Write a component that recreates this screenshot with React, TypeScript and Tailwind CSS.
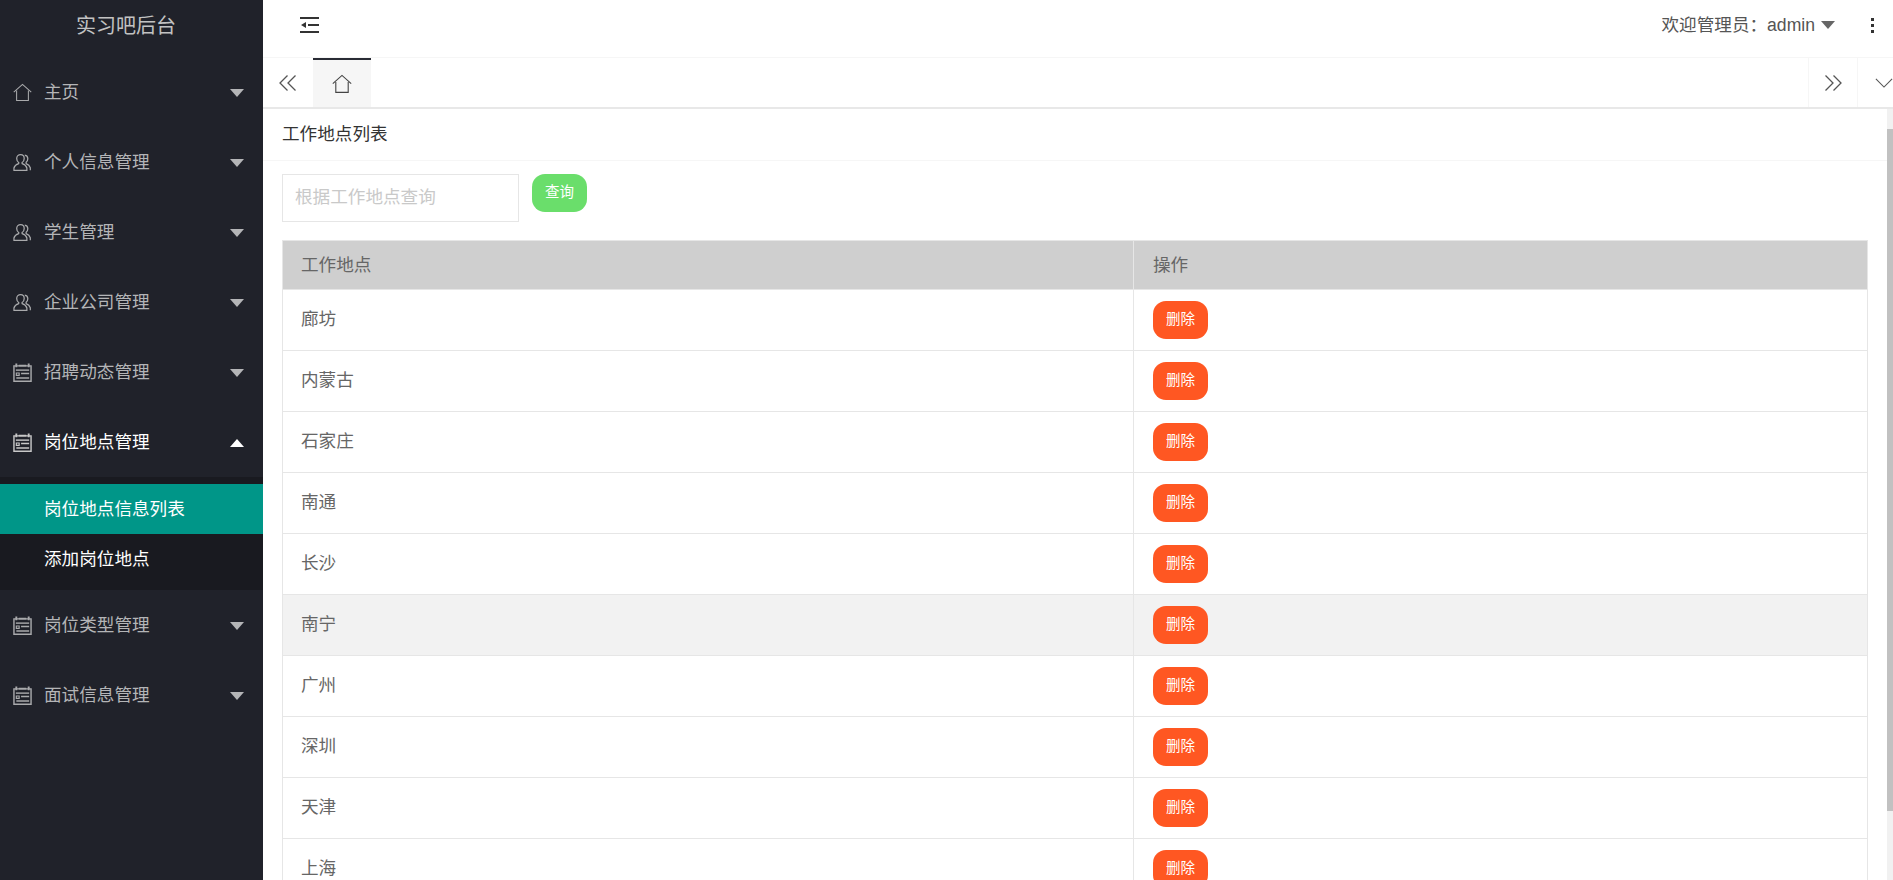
import React from "react";

const FONT = "font-['Liberation_Sans','Noto_Sans_CJK_SC',sans-serif]";

const HomeIcon = ({ className }: { className?: string }) => (
  <svg viewBox="0 0 20 20" className={className} fill="none" stroke="currentColor" strokeWidth="1.1">
    <path d="M0.8 9.6 10 1.4l9.2 8.2" />
    <path d="M3.8 8v10.4h12.4V8" />
  </svg>
);

const UsersIcon = ({ className }: { className?: string }) => (
  <svg viewBox="0 0 20 20" className={className} fill="none" stroke="currentColor" strokeWidth="1.3">
    <path d="M8 1.6c2.3 0 3.8 1.8 3.8 4.1 0 1.8-.9 3.4-2.2 4.2v1.3c2.3.8 4.4 2.2 5 4.6v2.4H1v-2.4c.6-2.4 2.7-3.800 5-4.600V9.900C4.700 9.100 3.900 7.500 3.900 5.700 3.900 3.400 5.700 1.600 8 1.600Z" />
    <path d="M12.400 2.200c2 .3 3.200 2 3.200 3.900 0 1.500-.7 2.900-1.800 3.700v1.400c2 .8 3.700 2.100 4.400 4.300v2.700" />
  </svg>
);

const ListIcon = ({ className }: { className?: string }) => (
  <svg viewBox="0 0 20 20" className={className} fill="none" stroke="currentColor">
    <path d="M1 3h18v16.300H1z" strokeWidth="1.500" />
    <path d="M3.500 0.500v4M16.500 0.500v4M6 2.800h8" strokeWidth="2" />
    <path d="M3 7.500h14" strokeWidth="1.500" />
    <path d="M3.500 10.500h3v2.500h-3z" strokeWidth="1.200" />
    <path d="M8.500 11h8.500M3.500 15.800h13.500" strokeWidth="1.600" />
  </svg>
);

const Caret = ({ up, className }: { up?: boolean; className?: string }) => (
  <svg viewBox="0 0 14 8" className={className} fill="currentColor">
    <path d={up ? "M0 8 7 0l7 8z" : "M0 0h14L7 8z"} />
  </svg>
);

const DoubleChevron = ({ left }: { left?: boolean }) => (
  <svg viewBox="0 0 18 16" className="w-[18px] h-[16px] text-[#555]" fill="none" stroke="currentColor" strokeWidth="1.300">
    {left ? <path d="M8.500 0.500 1 8l7.500 7.500M16.500 0.500 9 8l7.500 7.500" /> : <path d="M1.500 0.500 9 8l-7.500 7.500M9.500 0.500 17 8l-7.500 7.500" />}
  </svg>
);

const menu = [
  { label: "主页", icon: HomeIcon },
  { label: "个人信息管理", icon: UsersIcon },
  { label: "学生管理", icon: UsersIcon },
  { label: "企业公司管理", icon: UsersIcon },
  { label: "招聘动态管理", icon: ListIcon },
  { label: "岗位地点管理", icon: ListIcon, open: true },
  { label: "岗位类型管理", icon: ListIcon },
  { label: "面试信息管理", icon: ListIcon },
];

const places = ["廊坊", "内蒙古", "石家庄", "南通", "长沙", "南宁", "广州", "深圳", "天津", "上海"];

const Sidebar = () => (
  <aside className="w-[263px] shrink-0 h-full bg-[#20222a] text-[17.6px]">
    <div className="h-[57px] flex items-center justify-center text-[20px] text-[#c2c2c2] pb-[6px] pr-[11px]">实习吧后台</div>
    {menu.map((item) => {
      const Icon = item.icon;
      return (
        <div key={item.label}>
          <div className={`h-[70px] flex items-center pt-[1px] pl-[13px] pr-[19px] ${item.open ? "text-white" : "text-[#b4b5b7]"}`}>
            <Icon className={`w-[19px] h-[19px] mr-[12px] ${item.open ? "text-[#c8c8c8]" : "text-[#a9aaac]"}`} />
            <span className="flex-1 leading-none">{item.label}</span>
            <Caret up={item.open} className="w-[14px] h-[8px]" />
          </div>
          {item.open && (
            <div className="bg-[#191a20] pt-[7px] pb-[6px] text-white">
              <div className="h-[50px] bg-[#009688] flex items-center pl-[44px]">岗位地点信息列表</div>
              <div className="h-[50px] flex items-center pl-[44px]">添加岗位地点</div>
            </div>
          )}
        </div>
      );
    })}
  </aside>
);

const TopBar = () => (
  <header className="h-[58px] flex items-center border-b border-[#f6f6f6] text-[#555] text-[17.6px]">
    <svg viewBox="0 0 20 17" className="w-[20px] h-[17px] ml-[37px] text-[#333] mb-[6px]" fill="currentColor">
      <path d="M0 0h19v2H0zM8 7h11v2H8zM0 14h19v2H0zM1 8l5-3v6z" />
    </svg>
    <div className="ml-auto flex items-center mb-[6px]">
      <span>欢迎管理员：admin</span>
      <Caret className="w-[14px] h-[8px] ml-[6px] text-[#666]" />
      <div className="ml-[36px] mr-[19px] flex flex-col gap-[3px]">
        <span className="w-[3px] h-[3px] bg-[#333]" />
        <span className="w-[3px] h-[3px] bg-[#333]" />
        <span className="w-[3px] h-[3px] bg-[#333]" />
      </div>
    </div>
  </header>
);

const TabBar = () => (
  <div className="h-[51px] flex border-b-2 border-[#e8e8e8]">
    <div className="w-[50px] flex items-center justify-center">
      <DoubleChevron left />
    </div>
    <div className="w-[58px] bg-[#f6f6f6] border-t-2 border-[#292b34] flex items-center justify-center text-[#444]">
      <HomeIcon className="w-[20px] h-[20px]" />
    </div>
    <div className="ml-auto w-[50px] border-x border-[#f6f6f6] flex items-center justify-center">
      <DoubleChevron />
    </div>
    <div className="w-[35px] flex items-center justify-end">
      <svg viewBox="0 0 20 11" className="w-[18px] h-[10px] text-[#555]" fill="none" stroke="currentColor" strokeWidth="1.200">
        <path d="M1 1l9 9 9-9" />
      </svg>
    </div>
  </div>
);

const PlaceTable = () => (
  <table className="w-[1586px] table-fixed border-collapse text-[17.6px] text-[#666]">
    <thead>
      <tr className="h-[49px] bg-[#cfcfcf] font-normal">
        <th className="w-[851px] border border-[#e6e6e6] pl-[18px] text-left font-normal">工作地点</th>
        <th className="border border-[#e6e6e6] pl-[19px] text-left font-normal">操作</th>
      </tr>
    </thead>
    <tbody>
      {places.map((place) => (
        <tr key={place} className={`h-[61px] ${place === "南宁" ? "bg-[#f2f2f2]" : ""}`}>
          <td className="border border-[#e6e6e6] pl-[18px] pb-[2px]">{place}</td>
          <td className="border border-[#e6e6e6] pl-[19px]">
            <button className="w-[55px] h-[38px] rounded-[13px] bg-[#ff5722] text-white text-[14.500px] block">删除</button>
          </td>
        </tr>
      ))}
    </tbody>
  </table>
);

export default function App() {
  return (
    <div className={`${FONT} h-screen w-full flex overflow-hidden bg-white`}>
      <Sidebar />
      <main className="flex-1 min-w-0 flex flex-col">
        <TopBar />
        <TabBar />
        <div className="flex-1 min-h-0 flex">
          <div className="flex-1 min-w-0 overflow-hidden">
            <div className="h-[52px] border-b border-[#f6f6f6] pl-[19px] flex items-center text-[17.6px] text-[#333]">工作地点列表</div>
            <div className="pl-[19px] pt-[13px] flex items-start">
              <input
                placeholder="根据工作地点查询"
                className="w-[237px] h-[48px] border border-[#e6e6e6] pl-[12px] pb-[2px] text-[17.6px] outline-none placeholder:text-[#c9c9c9]"
              />
              <button className="ml-[13px] w-[55px] h-[38px] rounded-[13px] bg-[#6ade6b] text-white text-[14.500px]">查询</button>
            </div>
            <div className="pl-[19px] pt-[18px]">
              <PlaceTable />
            </div>
          </div>
          <div className="w-[6px] shrink-0 bg-[#f1f1f1] pt-[20px]">
            <div className="h-[682px] bg-[#c1c1c1]" />
          </div>
        </div>
      </main>
    </div>
  );
}
